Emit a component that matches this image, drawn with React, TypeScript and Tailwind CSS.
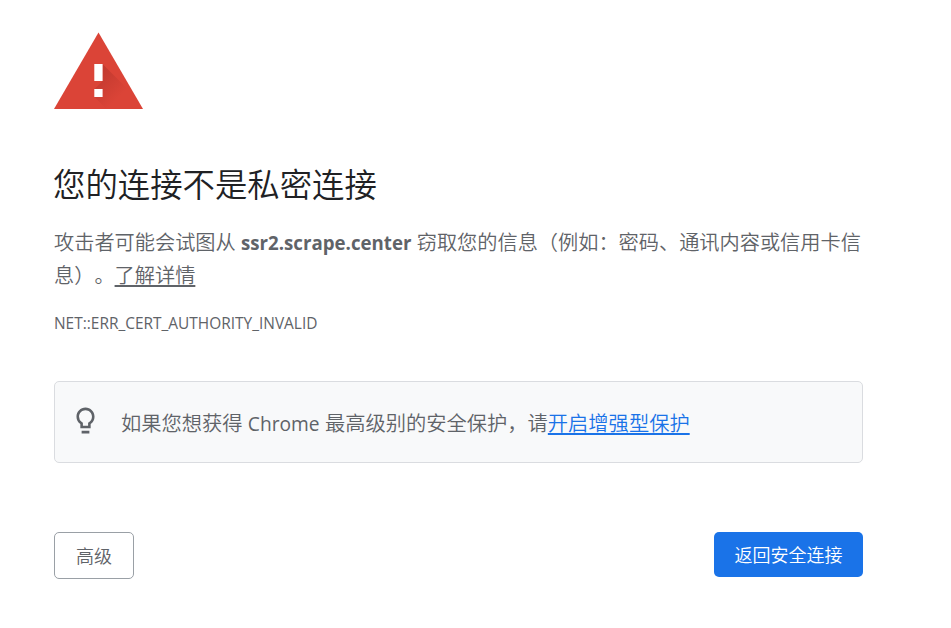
export default function App() {
  return (
    <main className="h-[628px] w-[951px] overflow-hidden bg-white pl-[54px] pt-8 font-['Open_Sans','Noto_Sans_CJK_SC',sans-serif] font-[350] text-[#5f6368] [text-spacing-trim:space-all]">
      <div className="w-[809px]">
        <svg width="89" height="77" viewBox="0 0 89 77" className="block">
          <defs>
            <linearGradient id="shade" x1="42" y1="40" x2="66" y2="64" gradientUnits="userSpaceOnUse">
              <stop offset="0" stopColor="#c0392f" />
              <stop offset="1" stopColor="#db4437" />
            </linearGradient>
          </defs>
          <path d="M44.5 .5 89 77H0Z" fill="#db4437" />
          <path d="M48.5 32 75 58.5 86 77H52.5L40.5 65v-8l8-8Z" fill="url(#shade)" />
          <path d="M40.3 32h8.3v17h-8.3zM40.3 57h8.3v8h-8.3z" fill="#fff" />
        </svg>
        <h1 className="-ml-px mt-[55px] whitespace-nowrap text-[32.4px] leading-[40px] text-[#202124]">您的连接不是私密连接</h1>
        <p className="mt-[21.5px] whitespace-nowrap text-[20.2px] leading-[32px]">
          攻击者可能会试图从 <b className="text-[18.7px] font-bold">ssr2.scrape.center</b> 窃取您的信息（例如：密码、通讯内容或信用卡信<br />息）。<a className="underline underline-offset-2">了解详情</a>
        </p>
        <p className="mt-[22.5px] text-[15.45px] leading-[20px] font-normal">NET::ERR_CERT_AUTHORITY_INVALID</p>
        <section className="mt-[48px] flex h-[82px] items-center rounded-[5px] border border-[#dadce0] bg-[#f8f9fa] pl-[15px]">
          <svg width="31" height="31" viewBox="0 0 24 24" fill="#5f6368" className="-mt-[3px]">
            <path d="M9 20h6v2H9zm3-18C8.14 2 5 5.14 5 9c0 2.38 1.19 4.47 3 5.74V18h8v-3.26c1.81-1.27 3-3.36 3-5.74 0-3.86-3.14-7-7-7zm2.85 11.1-.85.6V16h-4v-2.3l-.85-.6A4.997 4.997 0 0 1 7 9c0-2.76 2.24-5 5-5s5 2.24 5 5c0 1.63-.8 3.16-2.15 4.1z" />
          </svg>
          <p className="ml-5 mt-0.5 whitespace-nowrap text-[20.28px] leading-[32px]">如果您想获得 <span className="text-[19.2px] font-normal">Chrome</span> 最高级别的安全保护，请<a className="text-[#1a73e8] underline underline-offset-2">开启增强型保护</a></p>
        </section>
        <div className="mt-[69px] flex items-start justify-between text-[18px]">
          <button className="h-[47px] w-[80px] rounded-[5px] border border-[#9aa0a6] pt-px">高级</button>
          <button className="h-[45px] w-[149px] rounded-[5px] bg-[#1a73e8] pt-0.5 text-white">返回安全连接</button>
        </div>
      </div>
    </main>
  );
}
